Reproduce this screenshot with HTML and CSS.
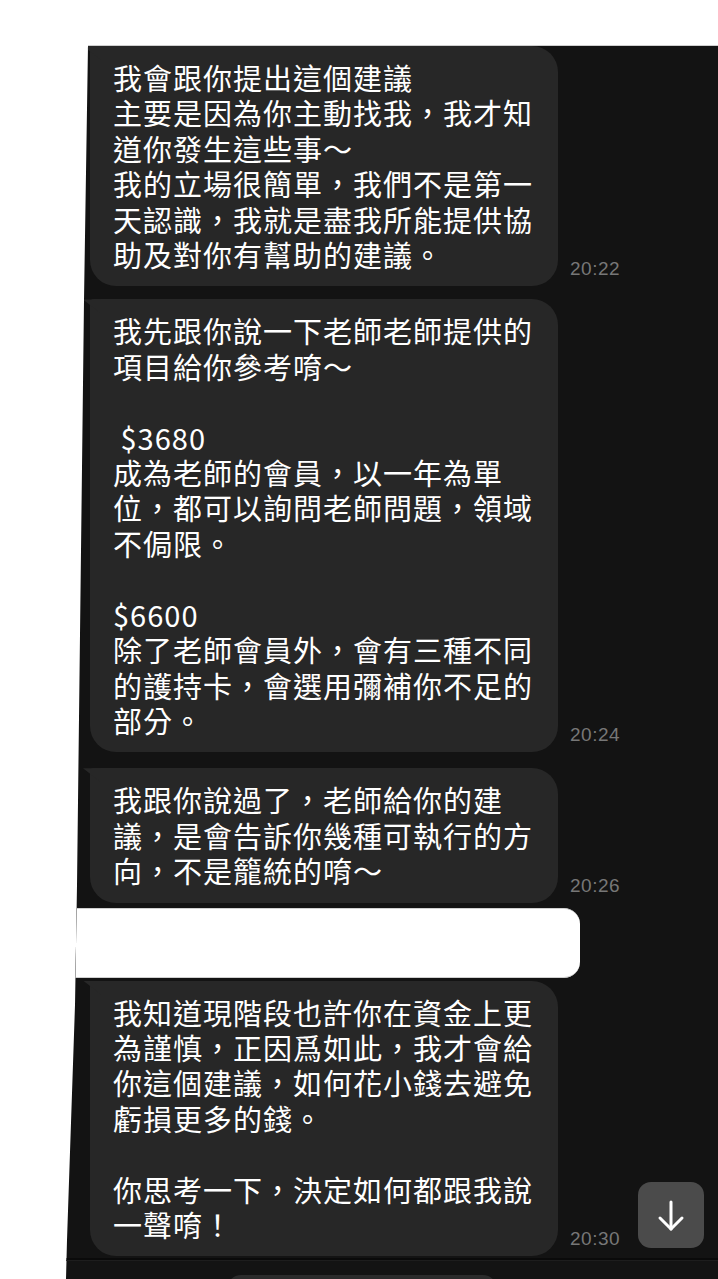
FILE: index.html
```html
<!DOCTYPE html>
<html lang="zh-Hant">
<head>
    <meta charset="UTF-8">
    <title>對話截圖</title>
    <link rel="stylesheet" href="styles.css">
</head>
<body>

<div class="shot">
    <div class="screen">

        <!-- parte de cima: três mensagens -->
        <section class="chat chat-top">
            <div class="row">
                <p class="bubble">我會跟你提出這個建議<br>主要是因為你主動找我，我才知<br>道你發生這些事～<br>我的立場很簡單，我們不是第一<br>天認識，我就是盡我所能提供協<br>助及對你有幫助的建議。</p>
                <span class="time">20:22</span>
            </div>
            <div class="row row-gap-s">
                <p class="bubble">我先跟你說一下老師老師提供的<br>項目給你參考唷～<br><br>&nbsp;$3680<br>成為老師的會員，以一年為單<br>位，都可以詢問老師問題，領域<br>不侷限。<br><br>$6600<br>除了老師會員外，會有三種不同<br>的護持卡，會選用彌補你不足的<br>部分。</p>
                <span class="time">20:24</span>
            </div>
            <div class="row row-gap-m">
                <p class="bubble">我跟你說過了，老師給你的建<br>議，是會告訴你幾種可執行的方<br>向，不是籠統的唷～</p>
                <span class="time">20:26</span>
            </div>
        </section>

        <!-- faixa branca recortada -->
        <div class="cut">
            <div class="cut-white"></div>
        </div>

        <!-- parte de baixo -->
        <section class="chat chat-bottom">
            <div class="row">
                <p class="bubble">我知道現階段也許你在資金上更<br>為謹慎，正因爲如此，我才會給<br>你這個建議，如何花小錢去避免<br>虧損更多的錢。<br><br>你思考一下，決定如何都跟我說<br>一聲唷！</p>
                <span class="time">20:30</span>
            </div>
            <div class="divider"></div>
            <div class="input-bar">
                <div class="input-field"></div>
            </div>

            <button class="scroll-down" type="button" aria-label="scroll down">
                <svg width="66" height="66" viewBox="0 0 66 66" fill="none" stroke="#fff" stroke-width="3" stroke-linecap="round" stroke-linejoin="round">
                    <path d="M33 20 L33 47"/>
                    <path d="M22 36 L33 47 L44 36"/>
                </svg>
            </button>
        </section>

    </div>
</div>

</body>
</html>
```

FILE: styles.css
```css
/* página */
html, body {
    margin: 0;
    padding: 0;
    background: #ffffff;
    overflow: hidden;
}

.shot {
    height: 1279px;
    padding-top: 45px;
    box-sizing: border-box;
    overflow: hidden;
}

/* recorte escuro com a borda esquerda inclinada */
.screen {
    height: 1234px;
    background: #131313;
    border-top: 1px solid #cfcfcf;
    box-sizing: border-box;
    overflow: hidden;
    clip-path: polygon(88px 0, 84px 255px, 77px 840px, 75px 960px, 67px 1195px, 66px 100%, 100% 100%, 100% 0);
    font-family: "Noto Sans CJK TC", "Noto Sans", sans-serif;
}

.chat-top {
    padding-bottom: 5px;
}

.chat-bottom {
    position: relative;
    padding-top: 3px;
}

/* linha de mensagem */
.row {
    display: flex;
    align-items: flex-end;
    gap: 12px;
    padding-left: 90px;
}

.row-gap-s {
    margin-top: 13px;
}

.row-gap-m {
    margin-top: 16px;
}

.bubble {
    position: relative;
    width: 468px;
    box-sizing: border-box;
    margin: 0;
    padding: 14px 18px 14px 23px;
    background: #272727;
    border-radius: 4px 26px 26px 26px;
    color: #ffffff;
    font-size: 29px;
    letter-spacing: 1px;
    line-height: 35.4px;
    white-space: nowrap;
}

/* rabinho da bolha */
.bubble::before {
    content: "";
    position: absolute;
    left: -7px;
    top: 0;
    width: 18px;
    height: 14px;
    background: #272727;
    clip-path: polygon(0 0, 100% 0, 100% 100%);
}

.time {
    margin-bottom: 8px;
    color: #777777;
    font-family: "Liberation Sans", Arial, sans-serif;
    font-size: 19px;
    letter-spacing: 0.5px;
    line-height: 1;
}

/* faixa branca no meio */
.cut {
    height: 70px;
    background: #131313;
}

.cut-white {
    width: 580px;
    height: 100%;
    box-sizing: border-box;
    background: #ffffff;
    border-top: 1px solid #d0d0d0;
    border-bottom: 1px solid #d0d0d0;
    border-radius: 0 16px 16px 0;
}

/* rodapé */
.divider {
    margin-top: 2px;
    height: 2px;
    background: #0a0a0a;
    border-bottom: 1px solid #1d1d1d;
}

.input-bar {
    padding-top: 14px;
    padding-left: 227px;
}

.input-field {
    width: 270px;
    height: 30px;
    background: #2b2b2b;
    border-radius: 14px;
}

.scroll-down {
    position: absolute;
    top: 204px;
    right: 14px;
    width: 66px;
    height: 66px;
    padding: 0;
    border: none;
    border-radius: 13px;
    background: #4b4b4b;
    display: flex;
    align-items: center;
    justify-content: center;
}
```
